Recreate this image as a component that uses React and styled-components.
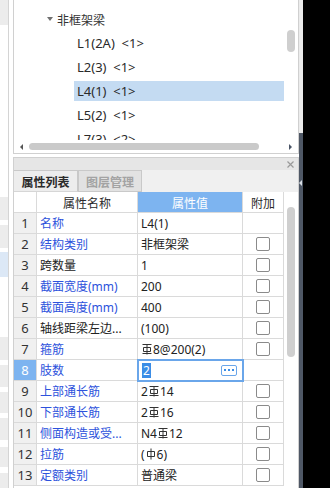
import React from 'react'
import styled, { createGlobalStyle } from 'styled-components'

const GlobalStyle = createGlobalStyle`
html, body { margin:0; padding:0; background:#fff; }
body {
  font-family: "Noto Sans", "Noto Sans CJK SC", sans-serif;
  font-size:12px;
  color:#222;
}
`
const Screen = styled.div`
display:flex;
width:330px;
height:488px;
overflow:hidden;
`
const LeftStrip = styled.div`
width:8px;
flex-shrink:0;
border-right:1px solid #d4d4d4;
display:flex;
flex-direction:column;
`
const StripBlock = styled.div`
flex-shrink:0;
height:${p => p.h}px;
background:${p => p.c};
`
const Main = styled.div`
width:286px;
margin-left:4px;
flex-shrink:0;
display:flex;
flex-direction:column;
`
const EdgeStrip = styled.div`
width:4px;
flex-shrink:0;
display:flex;
flex-direction:column;
`
const EdgeTop = styled.div`
height:133px;
background:#ececec;
`
const EdgeBottom = styled.div`
flex:1;
background:#4f5866;
display:flex;
flex-direction:column;
align-items:flex-start;
padding-top:47px;
`
const EdgeArrow = styled.div`
width:0;
height:0;
border-top:3px solid transparent;
border-bottom:3px solid transparent;
border-right:3px solid #d8dde4;
`
const Black = styled.div`
flex:1;
background:#000;
`

/* tree */
const TreePanel = styled.div`
height:153px;
border-left:1px solid #d0d0d0;
border-right:1px solid #d0d0d0;
border-bottom:1px solid #d0d0d0;
display:flex;
flex-direction:column;
`
const TreeBody = styled.div`
height:140px;
display:flex;
overflow:hidden;
`
const TreeList = styled.div`
flex:1;
padding-top:7px;
`
const GroupRow = styled.div`
height:24px;
display:flex;
align-items:center;
padding-left:33px;
font-family:"Noto Sans CJK SC", sans-serif;
color:#333;
`
const Caret = styled.span`
width:0;
height:0;
border-left:3px solid transparent;
border-right:3px solid transparent;
border-top:4px solid #707070;
margin-right:4px;
`
const ItemRow = styled.div`
height:24px;
padding:2px 0 2px 60px;
box-sizing:border-box;
`
const ItemLabel = styled.div`
height:20px;
line-height:20px;
padding-left:3px;
font-size:13px;
color:#2a2a2a;
white-space:pre;
background:${p => (p.selected ? '#c4dbf2' : 'transparent')};
`
const VScroll = styled.div`
width:14px;
flex-shrink:0;
padding-left:3px;
box-sizing:border-box;
`
const Thumb = styled.div`
width:8px;
margin-top:${p => p.top}px;
height:${p => p.h}px;
border-radius:4px;
background:#cfcfcf;
`
const HScroll = styled.div`
height:13px;
display:flex;
align-items:center;
padding:0 6px;
`
const ArrowL = styled.span`
width:0;
height:0;
border-top:3px solid transparent;
border-bottom:3px solid transparent;
border-right:3px solid #555;
`
const ArrowR = styled.span`
width:0;
height:0;
border-top:3px solid transparent;
border-bottom:3px solid transparent;
border-left:3px solid #4a5566;
`
const HThumb = styled.div`
width:230px;
height:7px;
margin-left:6px;
border-radius:4px;
background:#cacaca;
`
const HSpacer = styled.div`
flex:1;
`

/* property panel */
const PropPanel = styled.div`
margin-top:3px;
flex:1;
border:1px solid #d0d0d0;
border-bottom:none;
display:flex;
flex-direction:column;
`
const TitleBar = styled.div`
height:12px;
background:#e6e6e6;
display:flex;
justify-content:flex-end;
align-items:center;
padding-right:4px;
`
const TabRow = styled.div`
height:22px;
background:#f0f0f0;
display:flex;
`
const Tab = styled.div`
width:64px;
box-sizing:border-box;
border:1px solid #c9c9c9;
border-left:${p => (p.active ? 'none' : '1px solid #c9c9c9')};
border-bottom:${p => (p.active ? '1px solid #d6d6d6' : '1px solid #c9c9c9')};
background:${p => (p.active ? '#ededed' : '#e2e2e2')};
color:${p => (p.active ? '#2a2a2a' : '#a3a3a3')};
font-family:"Noto Sans CJK SC", sans-serif;
font-weight:700;
font-size:12px;
display:flex;
align-items:center;
justify-content:center;
`
const TableArea = styled.div`
flex:1;
display:flex;
overflow:hidden;
`
const Table = styled.div`
width:270px;
flex-shrink:0;
display:flex;
flex-direction:column;
`
const Row = styled.div`
display:grid;
grid-template-columns:23px 101px 105px 41px;
height:21px;
flex-shrink:0;
`
const Cell = styled.div`
box-sizing:border-box;
border-right:1px solid #dadada;
border-bottom:1px solid #dadada;
display:flex;
align-items:center;
overflow:hidden;
white-space:nowrap;
padding-left:${p => p.pad || 0}px;
justify-content:${p => (p.center ? 'center' : 'flex-start')};
background:${p => p.bg || 'transparent'};
color:${p => p.color || '#222'};
font-size:${p => p.fs || 12}px;
position:relative;
`
const HeadCell = styled(Cell)`
font-family:"Noto Sans CJK SC", sans-serif;
color:${p => p.color || '#2a2a2a'};
font-size:12px;
`
const EditCell = styled(Cell)`
outline:2px solid #6aa6ea;
outline-offset:-1px;
z-index:1;
justify-content:space-between;
padding-right:5px;
`
const Selected = styled.span`
background:#3b8de6;
color:#fff;
line-height:15px;
padding:0 1px;
`
const MoreButton = styled.div`
width:16px;
height:11px;
box-sizing:border-box;
border:1px solid #6aa6ea;
border-radius:2px;
display:flex;
align-items:center;
justify-content:center;
gap:2px;
`
const Dot = styled.span`
width:2px;
height:2px;
background:#3b8de6;
`
const Check = styled.span`
width:14px;
height:14px;
box-sizing:border-box;
border:1px solid #8a8a8a;
border-radius:2px;
background:#fff;
`
const Value = styled.span`
display:inline-flex;
align-items:center;
`
const TableScroll = styled.div`
flex:1;
padding-left:3px;
`

const stripBlocks = [
  [25, '#ececec'], [172, '#fff'], [23, '#ececec'], [5, '#fff'], [23, '#ececec'], [4, '#fff'],
  [25, '#dce8f6'], [60, '#fff'], [23, '#ececec'], [5, '#fff'], [22, '#ececec'], [5, '#fff'],
  [21, '#ececec'], [5, '#fff'], [22, '#ececec'], [7, '#fff'], [20, '#ececec'], [6, '#fff'], [15, '#ececec'],
]

const treeItems = ['L1(2A)  <1>', 'L2(3)  <1>', 'L4(1)  <1>', 'L5(2)  <1>', 'L7(3)  <2>']

const Bar3 = () => (
  <svg width="10" height="12" viewBox="0 0 10 12" style={{ margin: '0 1px' }}>
    <path d="M0.5 1.5H9.5M1.5 4.5H8.5V8.5H1.5ZM5 1.5V11.5M0.5 10.5H9.5" stroke="#333" strokeWidth="1" fill="none" />
  </svg>
)
const Bar1 = () => (
  <svg width="10" height="12" viewBox="0 0 10 12" style={{ margin: '0 1px' }}>
    <path d="M1.5 3.5H8.5V8.5H1.5ZM5 0.5V11.5" stroke="#333" strokeWidth="1" fill="none" />
  </svg>
)

const BLUE = '#2d52dc'
const rows = [
  { name: '名称', blue: true, value: 'L4(1)', check: false },
  { name: '结构类别', blue: true, value: '非框架梁', check: true },
  { name: '跨数量', blue: false, value: '1', check: true },
  { name: '截面宽度(mm)', blue: true, value: '200', check: true },
  { name: '截面高度(mm)', blue: true, value: '400', check: true },
  { name: '轴线距梁左边...', blue: false, value: '(100)', check: true },
  { name: '箍筋', blue: true, value: <Value><Bar3 />8@200(2)</Value>, check: true },
  { name: '肢数', blue: true, edit: true, check: false },
  { name: '上部通长筋', blue: true, value: <Value>2<Bar3 />14</Value>, check: true },
  { name: '下部通长筋', blue: true, value: <Value>2<Bar3 />16</Value>, check: true },
  { name: '侧面构造或受...', blue: true, value: <Value>N4<Bar3 />12</Value>, check: true },
  { name: '拉筋', blue: true, value: <Value>(<Bar1 />6)</Value>, check: true },
  { name: '定额类别', blue: true, value: '普通梁', check: true },
]

const App = () => {
  return (
    <Screen>
      <GlobalStyle />
      <LeftStrip>
        {stripBlocks.map(([h, c], i) => <StripBlock key={i} h={h} c={c} />)}
      </LeftStrip>
      <Main>
        <TreePanel>
          <TreeBody>
            <TreeList>
              <GroupRow><Caret />非框架梁</GroupRow>
              {treeItems.map((t, i) => (
                <ItemRow key={t}>
                  <ItemLabel selected={i === 2}>{t}</ItemLabel>
                </ItemRow>
              ))}
            </TreeList>
            <VScroll><Thumb top={30} h={22} /></VScroll>
          </TreeBody>
          <HScroll>
            <ArrowL />
            <HThumb />
            <HSpacer />
            <ArrowR />
          </HScroll>
        </TreePanel>
        <PropPanel>
          <TitleBar>
            <svg width="7" height="7" viewBox="0 0 7 7">
              <path d="M0.5 0.5L6.5 6.5M6.5 0.5L0.5 6.5" stroke="#9a9a9a" strokeWidth="1.2" />
            </svg>
          </TitleBar>
          <TabRow>
            <Tab active>属性列表</Tab>
            <Tab>图层管理</Tab>
          </TabRow>
          <TableArea>
            <Table>
              <Row>
                <HeadCell />
                <HeadCell center>属性名称</HeadCell>
                <HeadCell center bg="#7db4f0" color="#fff">属性值</HeadCell>
                <HeadCell center>附加</HeadCell>
              </Row>
              {rows.map((r, i) => (
                <Row key={i}>
                  <Cell center fs={13} bg={r.edit ? '#7db4f0' : '#f0f0f0'} color={r.edit ? '#fff' : '#333'}>{i + 1}</Cell>
                  <Cell pad={3} color={r.blue ? BLUE : '#222'}>{r.name}</Cell>
                  {r.edit ? (
                    <EditCell pad={4}>
                      <Selected>2</Selected>
                      <MoreButton><Dot /><Dot /><Dot /></MoreButton>
                    </EditCell>
                  ) : (
                    <Cell pad={3}>{r.value}</Cell>
                  )}
                  <Cell center>{r.check && <Check />}</Cell>
                </Row>
              ))}
            </Table>
            <TableScroll><Thumb top={15} h={150} /></TableScroll>
          </TableArea>
        </PropPanel>
      </Main>
      <EdgeStrip>
        <EdgeTop />
        <EdgeBottom><EdgeArrow /></EdgeBottom>
      </EdgeStrip>
      <Black />
    </Screen>
  )
}

export default App
